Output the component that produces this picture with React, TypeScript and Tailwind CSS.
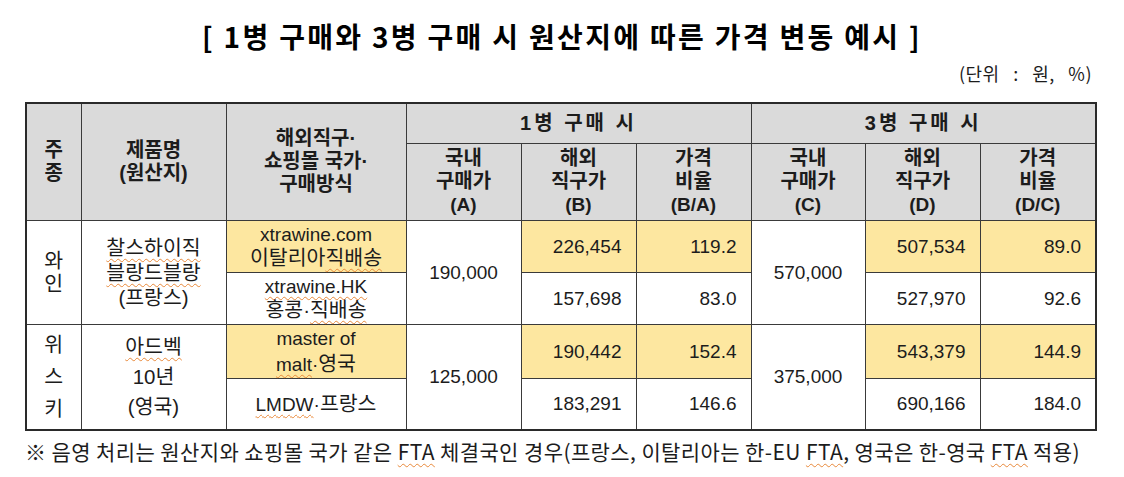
import React from 'react'

const sq = 'underline decoration-wavy decoration-[#e8893a] decoration-1 underline-offset-[3px]'

const th = 'border border-[#3a3a3a] bg-[#dadada] font-bold text-[20px] leading-[23px] text-center align-middle p-0'
const td = 'border border-[#3a3a3a] text-[19px] leading-[23px] align-middle p-0'
const ko = 'text-[20.5px]'
const yel = 'bg-[#fde7a0]'
const num = 'text-right pr-[14px]'

export default function App() {
    return (
        <div className="w-[1124px] h-[477px] bg-white text-[#1c1c1c] font-['Liberation_Sans','Noto_Sans_CJK_KR',sans-serif]">
            {/* title */}
            <div className="pt-[17px] h-[60px] text-center">
                <h1 className="text-[28px] leading-[38px] font-bold tracking-[2.3px] font-['Noto_Sans_CJK_KR',sans-serif] text-black">
                    [ 1병 구매와 3병 구매 시 원산지에 따른 가격 변동 예시 ]
                </h1>
            </div>

            <div className="h-[42px] pr-[32px] flex justify-end items-start">
                <span className="text-[18px] leading-[26px] tracking-[0.5px] font-['Noto_Sans_CJK_KR',sans-serif] [word-spacing:9px]">
                    (단위 : 원, %)
                </span>
            </div>

            {/* table */}
            <div className="pl-[25px]">
                <table className="border-collapse border-2 border-[#2a2a2a] table-fixed w-[1070px]">
                    <colgroup>
                        <col className="w-[55px]" />
                        <col className="w-[145px]" />
                        <col className="w-[180px]" />
                        <col className="w-[115px]" />
                        <col className="w-[115px]" />
                        <col className="w-[115px]" />
                        <col className="w-[114px]" />
                        <col className="w-[115px]" />
                        <col className="w-[116px]" />
                    </colgroup>
                    <thead>
                        <tr className="h-[40px]">
                            <th rowSpan={2} className={th}>
                                주<br />종
                            </th>
                            <th rowSpan={2} className={th}>
                                제품명
                                <br />
                                (원산지)
                            </th>
                            <th rowSpan={2} className={th}>
                                해외직구·
                                <br />
                                쇼핑몰 국가·
                                <br />
                                구매방식
                            </th>
                            <th colSpan={3} className={th + ' tracking-[3px]'}>
                                1병 구매 시
                            </th>
                            <th colSpan={3} className={th + ' tracking-[3px]'}>
                                3병 구매 시
                            </th>
                        </tr>
                        <tr className="h-[77px]">
                            <th className={th}>
                                국내
                                <br />
                                구매가
                                <br />
                                <span className="text-[19px]">(A)</span>
                            </th>
                            <th className={th}>
                                해외
                                <br />
                                직구가
                                <br />
                                <span className="text-[19px]">(B)</span>
                            </th>
                            <th className={th}>
                                가격
                                <br />
                                비율
                                <br />
                                <span className="text-[19px]">(B/A)</span>
                            </th>
                            <th className={th}>
                                국내
                                <br />
                                구매가
                                <br />
                                <span className="text-[19px]">(C)</span>
                            </th>
                            <th className={th}>
                                해외
                                <br />
                                직구가
                                <br />
                                <span className="text-[19px]">(D)</span>
                            </th>
                            <th className={th}>
                                가격
                                <br />
                                비율
                                <br />
                                <span className="text-[19px]">(D/C)</span>
                            </th>
                        </tr>
                    </thead>
                    <tbody>
                        {/* wine */}
                        <tr className="h-[52px]">
                            <td rowSpan={2} className={td + ' ' + ko + ' text-center'}>
                                와<br />인
                            </td>
                            <td rowSpan={2} className={td + ' ' + ko + ' text-center leading-[25px]'}>
                                <span className={sq}>찰스하이직</span>
                                <br />
                                <span className={sq}>블랑드블랑</span>
                                <br />
                                (프랑스)
                            </td>
                            <td className={td + ' text-center ' + yel + ' leading-[22px]'}>
                                xtrawine.com
                                <br />
                                <span className={ko}>
                                    이탈리아<span className={sq}>직배송</span>
                                </span>
                            </td>
                            <td rowSpan={2} className={td + ' text-center'}>
                                190,000
                            </td>
                            <td className={td + ' ' + num + ' ' + yel}>226,454</td>
                            <td className={td + ' ' + num + ' ' + yel}>119.2</td>
                            <td rowSpan={2} className={td + ' text-center'}>
                                570,000
                            </td>
                            <td className={td + ' ' + num + ' ' + yel}>507,534</td>
                            <td className={td + ' ' + num + ' ' + yel}>89.0</td>
                        </tr>
                        <tr className="h-[52px]">
                            <td className={td + ' text-center leading-[22px]'}>
                                <span className={sq}>xtrawine.HK</span>
                                <br />
                                <span className={ko}>
                                    홍콩·<span className={sq}>직배송</span>
                                </span>
                            </td>
                            <td className={td + ' ' + num}>157,698</td>
                            <td className={td + ' ' + num}>83.0</td>
                            <td className={td + ' ' + num}>527,970</td>
                            <td className={td + ' ' + num}>92.6</td>
                        </tr>

                        {/* whisky */}
                        <tr className="h-[54px]">
                            <td rowSpan={2} className={td + ' ' + ko + ' text-center leading-[32px]'}>
                                위<br />스<br />키
                            </td>
                            <td rowSpan={2} className={td + ' ' + ko + ' text-center leading-[30px]'}>
                                <span className={sq}>아드벡</span>
                                <br />
                                10년
                                <br />
                                (영국)
                            </td>
                            <td className={td + ' text-center ' + yel + ' leading-[25px]'}>
                                master of
                                <br />
                                <span className={sq}>malt</span>·<span className={ko}>영국</span>
                            </td>
                            <td rowSpan={2} className={td + ' text-center'}>
                                125,000
                            </td>
                            <td className={td + ' ' + num + ' ' + yel}>190,442</td>
                            <td className={td + ' ' + num + ' ' + yel}>152.4</td>
                            <td rowSpan={2} className={td + ' text-center'}>
                                375,000
                            </td>
                            <td className={td + ' ' + num + ' ' + yel}>543,379</td>
                            <td className={td + ' ' + num + ' ' + yel}>144.9</td>
                        </tr>
                        <tr className="h-[52px]">
                            <td className={td + ' text-center'}>
                                <span className={sq}>LMDW</span>·<span className={ko}>프랑스</span>
                            </td>
                            <td className={td + ' ' + num}>183,291</td>
                            <td className={td + ' ' + num}>146.6</td>
                            <td className={td + ' ' + num}>690,166</td>
                            <td className={td + ' ' + num}>184.0</td>
                        </tr>
                    </tbody>
                </table>
            </div>

            {/* footnote */}
            <p className="pl-[25px] pt-[5px] text-[21px] leading-[30px] tracking-[0.4px] whitespace-nowrap font-['Noto_Sans_CJK_KR',sans-serif]">
                ※ 음영 처리는 원산지와 쇼핑몰 국가 같은 <span className={sq}>FTA</span> 체결국인 경우(프랑스, 이탈리아는
                한-EU <span className={sq}>FTA</span>, 영국은 한-영국 <span className={sq}>FTA</span> 적용)
            </p>
        </div>
    )
}
